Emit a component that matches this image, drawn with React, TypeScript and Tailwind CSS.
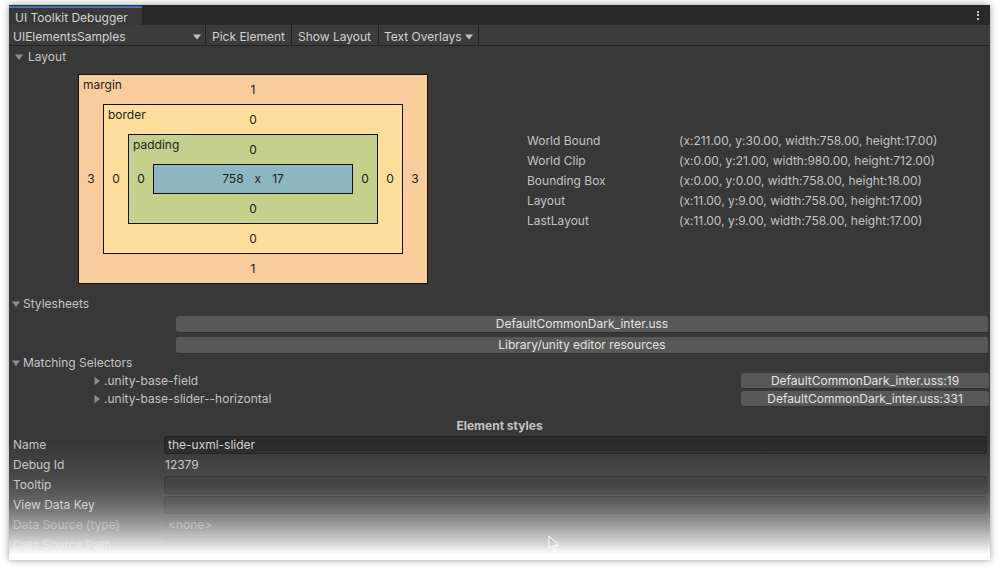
import React from "react";

const Tri = ({ dir = "down", className = "" }: { dir?: "down" | "right"; className?: string }) => (
  <svg width="8" height="8" viewBox="0 0 8 8" className={className}>
    {dir === "down" ? (
      <path d="M0 1.5 L8 1.5 L4 7 Z" fill="#8f8f8f" />
    ) : (
      <path d="M1.5 0 L7 4 L1.5 8 Z" fill="#8f8f8f" />
    )}
  </svg>
);

const Caret = () => (
  <svg width="8" height="6" viewBox="0 0 8 6">
    <path d="M0 0.5 L8 0.5 L4 5.5 Z" fill="#c4c4c4" />
  </svg>
);

type BoxProps = {
  label?: string;
  w: string;
  h: string;
  bg: string;
  top: string;
  bottom: string;
  left: string;
  right: string;
  children: React.ReactNode;
};

function Box({ label, w, h, bg, top, bottom, left, right, children }: BoxProps) {
  return (
    <div className={`relative border border-[#111] grid grid-cols-[24px_1fr_24px] grid-rows-[29px_1fr_29px] ${w} ${h} ${bg}`}>
      {label && <span className="absolute left-[4px] top-[2px] leading-[16px]">{label}</span>}
      <div />
      <div className="flex items-center justify-center pt-[1px]">{top}</div>
      <div />
      <div className="flex items-center justify-center">{left}</div>
      <div className="flex items-center justify-center">{children}</div>
      <div className="flex items-center justify-center">{right}</div>
      <div />
      <div className="flex items-center justify-center pt-[1px]">{bottom}</div>
      <div />
    </div>
  );
}

const props = [
  ["World Bound", "(x:211.00, y:30.00, width:758.00, height:17.00)"],
  ["World Clip", "(x:0.00, y:21.00, width:980.00, height:712.00)"],
  ["Bounding Box", "(x:0.00, y:0.00, width:758.00, height:18.00)"],
  ["Layout", "(x:11.00, y:9.00, width:758.00, height:17.00)"],
  ["LastLayout", "(x:11.00, y:9.00, width:758.00, height:17.00)"],
];

export default function App() {
  return (
    <div className="w-[1000px] h-[570px] bg-white pt-[5px] pl-[9px] font-['Inter',sans-serif] text-[12px]">
      <div className="relative w-[981px] h-[555px] bg-[#383838] overflow-hidden shadow-[0_0_7px_rgba(0,0,0,0.4)]">
        {/* tab strip */}
        <div className="flex h-[20px] bg-[#282828]">
          <div className="w-[133px] mt-[1px] bg-[#383838] border-t-2 border-[#3a79bb] pl-[6px] pt-[1px] leading-[17px] text-[#d2d2d2]">
            UI Toolkit Debugger
          </div>
          <div className="flex-1" />
          <div className="flex flex-col items-center justify-center gap-[1.5px] w-[22px] pr-[2px]">
            <span className="w-[2px] h-[2px] bg-[#c4c4c4]" />
            <span className="w-[2px] h-[2px] bg-[#c4c4c4]" />
            <span className="w-[2px] h-[2px] bg-[#c4c4c4]" />
          </div>
        </div>

        {/* toolbar */}
        <div className="flex h-[21px] bg-[#3c3c3c] border-b border-[#232323] text-[#d2d2d2] leading-[20px]">
          <div className="w-[197px] flex items-center justify-between pl-[4px] pr-[4px] pt-[3px] border-r border-[#232323]">
            <span>UIElementsSamples</span>
            <Caret />
          </div>
          <div className="w-[86px] flex items-center pl-[6px] pt-[3px] border-r border-[#232323]">Pick Element</div>
          <div className="w-[87px] flex items-center pl-[6px] pt-[3px] border-r border-[#232323]">Show Layout</div>
          <div className="w-[100px] flex items-center gap-[3px] pl-[5px] pt-[3px] border-r border-[#232323]">
            <span>Text Overlays</span>
            <Caret />
          </div>
        </div>

        {/* layout foldout */}
        <div className="flex items-center h-[17px] mt-[2px] pl-[6px] gap-[5px] text-[#c4c4c4]">
          <Tri />
          <span>Layout</span>
        </div>

        <div className="flex items-center mt-[9px] pl-[69px] text-[#1e1e1e]">
          <Box label="margin" w="w-[350px]" h="h-[210px]" bg="bg-[#f9cc9b]" top="1" bottom="1" left="3" right="3">
            <Box label="border" w="w-[300px]" h="h-[150px]" bg="bg-[#fddf9b]" top="0" bottom="0" left="0" right="0">
              <Box label="padding" w="w-[250px]" h="h-[90px]" bg="bg-[#c4d08c]" top="0" bottom="0" left="0" right="0">
                <div className="w-[200px] h-[30px] border border-[#111] bg-[#8db6c2] flex items-center justify-center gap-[11px]">
                  <span>758</span>
                  <span>x</span>
                  <span>17</span>
                </div>
              </Box>
            </Box>
          </Box>

          <div className="ml-[99px] text-[#c2c2c2] pt-[3px]">
            {props.map(([k, v]) => (
              <div key={k} className="flex h-[20px] items-center">
                <span className="w-[152px]">{k}</span>
                <span>{v}</span>
              </div>
            ))}
          </div>
        </div>

        {/* stylesheets */}
        <div className="flex items-center h-[16px] mt-[12px] pl-[3px] gap-[3px] text-[#c4c4c4]">
          <Tri />
          <span>Stylesheets</span>
        </div>
        <div className="flex flex-col gap-[4px] mt-[4px] ml-[167px] mr-[2px] text-[#e4e4e4]">
          <div className="h-[17px] rounded-[3px] bg-[#585858] border-b border-[#303030] flex items-center justify-center">
            DefaultCommonDark_inter.uss
          </div>
          <div className="h-[17px] rounded-[3px] bg-[#585858] border-b border-[#303030] flex items-center justify-center">
            Library/unity editor resources
          </div>
        </div>

        {/* matching selectors */}
        <div className="flex items-center h-[16px] mt-[1px] pl-[3px] gap-[3px] text-[#c4c4c4]">
          <Tri />
          <span>Matching Selectors</span>
        </div>
        <div className="flex flex-col gap-[2px] mt-[2px] text-[#c4c4c4]">
          {[
            [".unity-base-field", "DefaultCommonDark_inter.uss:19"],
            [".unity-base-slider--horizontal", "DefaultCommonDark_inter.uss:331"],
          ].map(([sel, file]) => (
            <div key={sel} className="flex items-center h-[16px]">
              <div className="flex items-center gap-[3px] pl-[84px] flex-1">
                <Tri dir="right" />
                <span>{sel}</span>
              </div>
              <div className="w-[248px] h-[16px] mr-[1px] rounded-[3px] bg-[#585858] border-b border-[#303030] flex items-center justify-center text-[#e4e4e4]">
                {file}
              </div>
            </div>
          ))}
        </div>

        {/* element styles */}
        <div className="text-center font-bold text-[#c4c4c4] h-[18px] leading-[18px] mt-[10px]">Element styles</div>
        <div className="flex flex-col text-[#c4c4c4]">
          <div className="flex items-center h-[20px]">
            <span className="w-[155px] pl-[4px]">Name</span>
            <div className="flex-1 mr-[3px] h-[18px] rounded-[3px] bg-[#2a2a2a] border border-[#202020] pl-[3px] leading-[16px] text-[#d2d2d2]">
              the-uxml-slider
            </div>
          </div>
          <div className="flex items-center h-[20px]">
            <span className="w-[155px] pl-[4px]">Debug Id</span>
            <span className="pl-[1px]">12379</span>
          </div>
          <div className="flex items-center h-[20px]">
            <span className="w-[155px] pl-[4px]">Tooltip</span>
            <div className="flex-1 mr-[3px] h-[18px] rounded-[3px] bg-[#2f2f2f] border border-[#242424]" />
          </div>
          <div className="flex items-center h-[20px]">
            <span className="w-[155px] pl-[4px]">View Data Key</span>
            <div className="flex-1 mr-[3px] h-[18px] rounded-[3px] bg-[#2f2f2f] border border-[#242424]" />
          </div>
          <div className="flex items-center h-[20px] opacity-50">
            <span className="w-[155px] pl-[4px]">Data Source (type)</span>
            <div className="flex-1 mr-[3px] h-[18px] rounded-[3px] bg-[#333] border border-[#2a2a2a] pl-[3px] leading-[16px]">
              &lt;none&gt;
            </div>
          </div>
          <div className="flex items-center h-[20px] opacity-50">
            <span className="w-[155px] pl-[4px]">Data Source Path</span>
            <div className="flex-1 mr-[3px] h-[18px] rounded-[3px] bg-[#2f2f2f] border border-[#242424]" />
          </div>
        </div>

        {/* mouse pointer */}
        <svg className="absolute left-[539px] top-[530px]" width="12" height="18" viewBox="0 0 12 18">
          <path d="M1 1 L1 14 L4.2 11 L6.5 16.5 L8.6 15.6 L6.3 10.3 L10.6 10.3 Z" fill="#111" stroke="#fff" strokeWidth="1" />
        </svg>

        {/* bottom fade */}
        <div className="absolute left-0 right-0 bottom-0 h-[118px] bg-[linear-gradient(to_bottom,rgba(255,255,255,0)_0%,rgba(255,255,255,0.05)_19%,rgba(255,255,255,0.11)_36%,rgba(255,255,255,0.25)_53%,rgba(255,255,255,0.5)_70%,rgba(255,255,255,0.8)_86%,#fff_95%)]" />
      </div>
    </div>
  );
}
